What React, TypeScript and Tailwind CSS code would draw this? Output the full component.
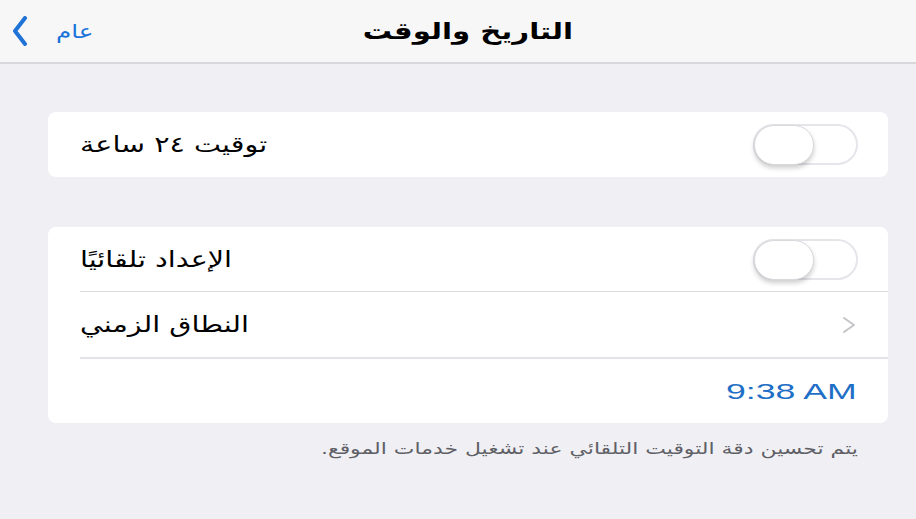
import React from 'react';

const arabic = { fontFamily: '"DejaVu Sans", "Noto Sans", sans-serif' };

const Toggle: React.FC = () => (
  <div className="relative w-[105px] h-[41px] rounded-full border-2 border-[#e5e5ea] bg-white">
    <div className="absolute -left-[1px] -top-[1px] w-[60px] h-[40px] rounded-full bg-white border border-[#d9d9de] shadow-[0_3px_5px_rgba(0,0,0,0.2)]" />
  </div>
);

const Label: React.FC<{ children: React.ReactNode }> = ({ children }) => (
  <span dir="rtl" className="inline-block text-[22px] text-black origin-left scale-x-[1.3]">
    {children}
  </span>
);

export default function App() {
  return (
    <div className="w-[916px] h-[519px] bg-[#efeff4] overflow-hidden" style={arabic}>
      {/* Nav bar */}
      <div className="h-[64px] bg-[#f7f7f8] border-b-2 border-[#d8d8dc] flex items-center relative">
        <div className="flex items-center pl-[12px] gap-[28px] text-[#1a73d8]">
          <svg width="16" height="30" viewBox="0 0 16 30" fill="none">
            <path d="M13 2 L3 15 L13 28" stroke="#1f72d6" strokeWidth="4" strokeLinecap="round" strokeLinejoin="round" />
          </svg>
          <span className="inline-block text-[19px] leading-none origin-left scale-x-[1.3]">عام</span>
        </div>
        <div className="absolute left-0 right-0 top-0 h-[62px] flex items-center justify-center pointer-events-none">
          <span className="inline-block ml-[20px] text-[23px] font-bold text-black origin-center scale-x-[1.27]">التاريخ والوقت</span>
        </div>
      </div>

      <div className="pl-[48px] pr-[28px] pt-[48px]">
        {/* Card 1 */}
        <div className="bg-white rounded-[8px] h-[65px] flex items-center justify-between pl-[32px] pr-[30px]">
          <Label>توقيت ٢٤ ساعة</Label>
          <Toggle />
        </div>

        {/* Card 2 */}
        <div className="mt-[50px] bg-white rounded-[8px] flex flex-col">
          <div className="h-[64px] flex items-center justify-between pl-[32px] pr-[30px]">
            <Label>الإعداد تلقائيًا</Label>
            <Toggle />
          </div>
          <div className="ml-[32px] h-[1px] bg-[#dcdce0]" />
          <div className="h-[65px] flex items-center justify-between pl-[32px] pr-[32px]">
            <Label>النطاق الزمني</Label>
            <svg width="14" height="18" viewBox="0 0 14 18" fill="none">
              <path d="M2 2 L12 9 L2 16" stroke="#c4c4c9" strokeWidth="2" strokeLinecap="round" strokeLinejoin="round" />
            </svg>
          </div>
          <div className="ml-[32px] h-[2px] bg-[#e3e3e7]" />
          <div className="h-[64px] flex items-center justify-end pr-[31px]">
            <span
              className="inline-block text-[22px] text-[#1f6fc6] origin-right scale-x-[1.62]"
              style={{ fontFamily: '"Liberation Sans", Arial, sans-serif' }}
            >
              9:38 AM
            </span>
          </div>
        </div>

        {/* Footer */}
        <div className="mt-[14px] pr-[30px] flex justify-end">
          <span dir="rtl" className="inline-block text-[16px] text-[#5f5f66] origin-right scale-x-[1.37]">
            يتم تحسين دقة التوقيت التلقائي عند تشغيل خدمات الموقع.
          </span>
        </div>
      </div>
    </div>
  );
}
